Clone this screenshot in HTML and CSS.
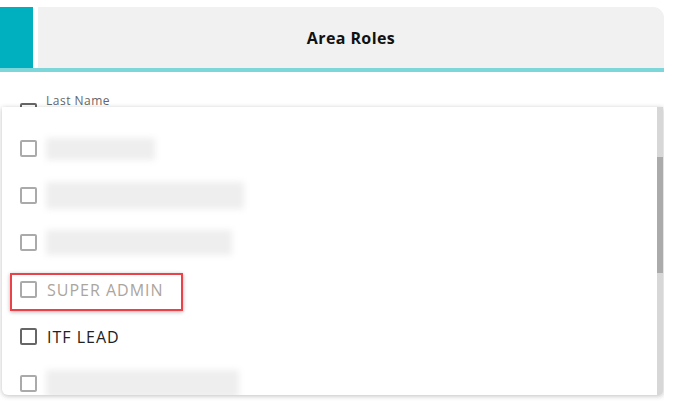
FILE: index.html
```html
<!DOCTYPE html>
<html>
<head>
    <title>Area Roles</title>
    <link rel="stylesheet" href="styles.css">
</head>
<body>
    <div class="page">
        <div class="tabs">
            <div class="tab-accent"></div>
            <div class="tab-title">Area Roles</div>
        </div>
        <div class="tab-line"></div>

        <div class="field">
            <span class="box"></span>
            <span class="field-label">Last Name</span>
        </div>

        <!-- dropdown list opened over the form -->
        <div class="dropdown">
            <ul class="options">
                <li class="option">
                    <span class="box"></span>
                    <span class="blur" style="width: 109px; height: 22px;"></span>
                </li>
                <li class="option">
                    <span class="box"></span>
                    <span class="blur" style="width: 198px; height: 27px;"></span>
                </li>
                <li class="option">
                    <span class="box"></span>
                    <span class="blur" style="width: 186px; height: 25px;"></span>
                </li>
                <li class="option option-disabled">
                    <span class="box"></span>
                    <span class="option-text">SUPER ADMIN</span>
                    <span class="highlight"></span>
                </li>
                <li class="option option-active">
                    <span class="box"></span>
                    <span class="option-text">ITF LEAD</span>
                </li>
                <li class="option">
                    <span class="box"></span>
                    <span class="blur" style="width: 193px; height: 28px;"></span>
                </li>
            </ul>
            <div class="scrollbar">
                <div class="scroll-thumb"></div>
            </div>
        </div>
    </div>
</body>
</html>
```

FILE: styles.css
```css
body {
    margin: 0;
    background-color: #fff;
    font-family: "Open Sans", Arial, sans-serif;
}
.page {
    position: relative;
    width: 664px;
    padding-top: 7px;
    height: 394px;
    overflow: hidden;
}
.tabs {
    display: flex;
    height: 61px;
    gap: 5px;
}
.tab-accent {
    width: 33px;
    background-color: #00b0bf;
}
.tab-title {
    flex: 1;
    display: flex;
    align-items: center;
    justify-content: center;
    background-color: #f1f1f1;
    border-top-right-radius: 11px;
    font-size: 16px;
    font-weight: bold;
    letter-spacing: 0.4px;
    color: #111;
    padding-top: 1px;
}
.tab-line {
    height: 4px;
    background-color: #7dd6da;
}
.field {
    display: flex;
    align-items: center;
    gap: 9px;
    padding: 17px 0 0 20px;
}
.field-label {
    font-size: 12px;
    letter-spacing: 0.5px;
    color: #666;
    margin-top: -8px;
}
.box {
    display: inline-block;
    width: 13px;
    height: 13px;
    border: 2px solid #aaa;
    border-radius: 2px;
    flex-shrink: 0;
}
.field .box {
    border-color: #666;
    margin-top: 14px;
}
.dropdown {
    position: absolute;
    left: 2px;
    top: 107px;
    width: 661px;
    height: 288px;
    display: flex;
    background-color: #fff;
    border-radius: 0 0 4px 6px;
    box-shadow: 0 1px 5px rgba(0, 0, 0, 0.25);
    overflow: hidden;
}
.options {
    flex: 1;
    list-style: none;
    margin: 0;
    padding: 18px 0 0 0;
}
.option {
    position: relative;
    display: flex;
    align-items: center;
    gap: 9px;
    height: 47px;
    padding-left: 18px;
}
.blur {
    display: inline-block;
    background-color: #eeeeee;
    filter: blur(3px);
}
.option-text {
    font-size: 16px;
    letter-spacing: 1px;
    color: #222;
    margin-left: 1px;
}
.option-disabled .option-text {
    color: #aba59d;
}
.option-active .box {
    border-color: #666;
}
.highlight {
    position: absolute;
    left: 8px;
    top: 7px;
    width: 169px;
    height: 34px;
    border: 2px solid #ea4248;
    box-shadow: 0 1px 4px rgba(0, 0, 0, 0.3);
}
.scrollbar {
    width: 6px;
    background-color: #d7d7d7;
    padding-top: 50px;
}
.scroll-thumb {
    height: 116px;
    background-color: #ababab;
}
```
